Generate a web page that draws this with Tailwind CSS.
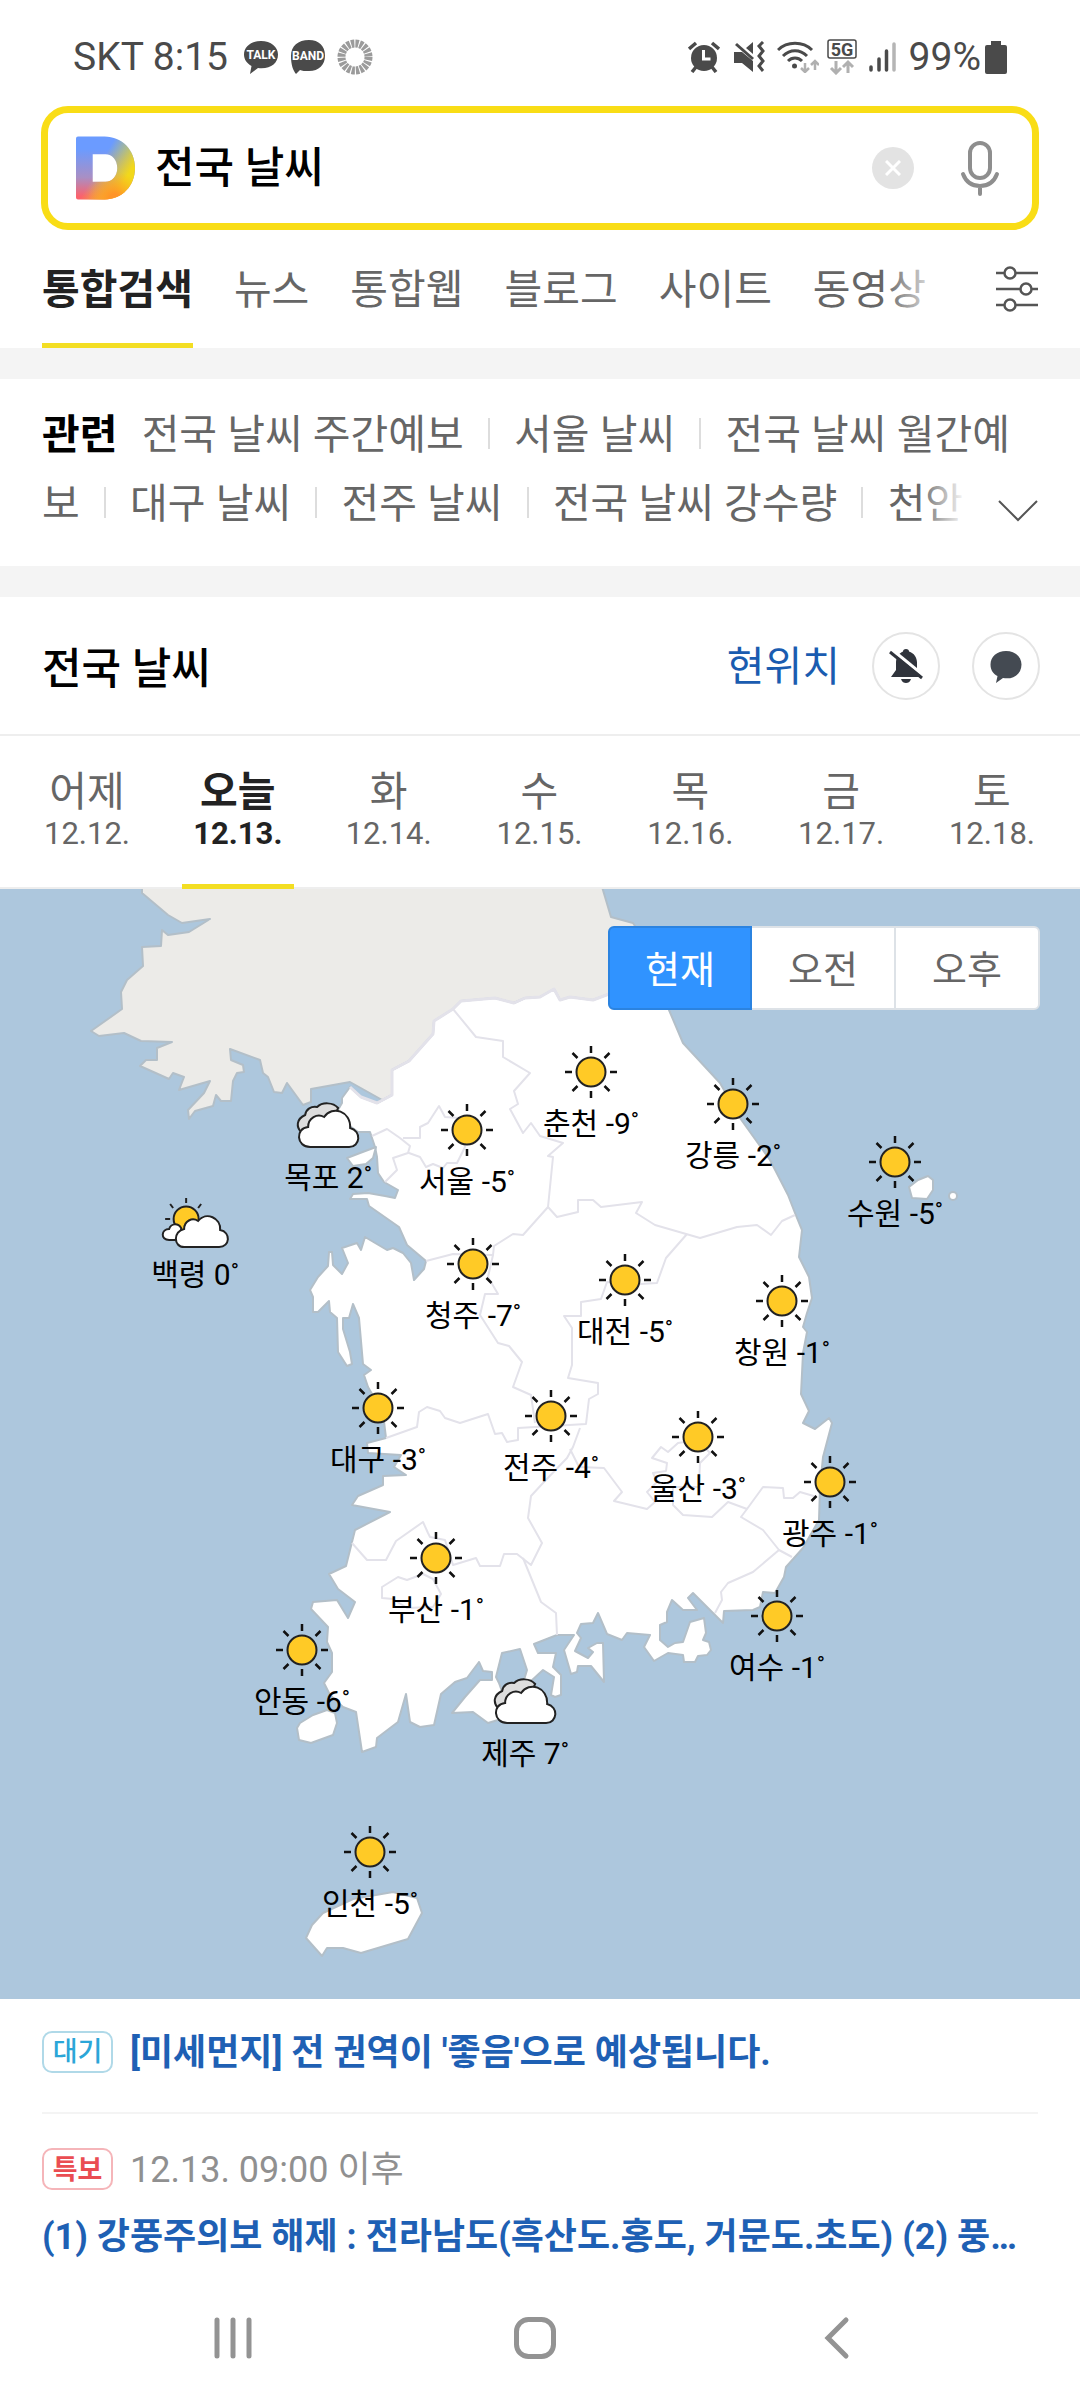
<!DOCTYPE html>
<html lang="ko">
<head>
  <meta charset="UTF-8" />
  <meta name="viewport" content="width=device-width, initial-scale=1" />
  <title>전국 날씨 - 통합검색</title>
  <script src="https://cdn.jsdelivr.net/npm/@tailwindcss/browser@4"></script>
</head>
<body class="bg-white text-black font-[Roboto,'Noto_Sans_CJK_KR',sans-serif]">

  <!-- 상태바 -->
  <div class="flex h-[106px] items-center justify-between px-[73px] pt-2 text-[39px] text-[#4a4a4a]">
    <div class="flex items-center gap-[11px]">
      <span>SKT 8:15</span>
      <svg class="ml-1 h-9 w-9" viewBox="0 0 36 36">
        <path d="M18 2C8 2 1 8 1 15.500c0 5 3 9 7.500 11.500L7 35l8-6c12 1.500 20-4.500 20-13.500C35 8 28 2 18 2z" fill="#4a4a4a" />
        <text x="18" y="20" text-anchor="middle" font-size="12" font-weight="700" fill="#fff">TALK</text>
      </svg>
      <svg class="h-9 w-9" viewBox="0 0 36 36">
        <path d="M19 1C8 1 1 7 1 17c0 9 2 14 5 18l4-4c2 1 5 1 9 1 10 0 16-6 16-15.500S29 1 19 1z" fill="#4a4a4a" />
        <text x="18" y="21" text-anchor="middle" font-size="12" font-weight="700" fill="#fff">BAND</text>
      </svg>
      <svg class="h-9 w-9" viewBox="0 0 36 36">
        <circle cx="18" cy="18" r="13.500" fill="none" stroke="#9b9b9b" stroke-width="8" stroke-dasharray="3.200 1.040" />
      </svg>
    </div>
    <div class="flex items-center">
      <svg class="h-8 w-8" viewBox="0 0 32 32">
        <circle cx="16" cy="17" r="13" fill="#4a4a4a" />
        <path d="M1 8l7-6M31 8l-7-6M8 26l-4 5M24 26l4 5" stroke="#4a4a4a" stroke-width="3.500" />
        <path d="M15.500 9v9h7" fill="none" stroke="#fff" stroke-width="3" />
      </svg>
      <svg class="ml-[13px] h-8 w-8" viewBox="0 0 32 32">
        <path d="M1 11h8l11 9v11L9 22H1zM13 7l7-6v12z" fill="#4a4a4a" />
        <path d="M3 3l17 15" stroke="#4a4a4a" stroke-width="3" />
        <path d="M30 1l-4 4 4 5-4 5 4 5-4 5 4 5" fill="none" stroke="#4a4a4a" stroke-width="3" />
      </svg>
      <svg class="ml-3 h-8 w-[42px]" viewBox="0 0 42 32" fill="none" stroke-width="3">
        <path d="M1 9c9-9 25-9 34 0M6 15c7-7 17-7 24 0M11 20c4-4 10-4 14 0" stroke="#4a4a4a" />
        <circle cx="17.500" cy="25" r="2.500" fill="#4a4a4a" />
        <path d="M28 22v9m-4-4l4 4 4-4M38 29v-9m-4 4l4-4 4 4" stroke="#b0b0b0" stroke-width="2.500" />
      </svg>
      <svg class="ml-2 h-9 w-[30px]" viewBox="0 0 30 36">
        <rect x="1" y="1" width="28" height="18" rx="2" fill="none" stroke="#4a4a4a" stroke-width="1.500" />
        <text x="15" y="16.500" text-anchor="middle" font-size="18" font-weight="700" fill="#4a4a4a">5G</text>
        <path d="M9 22v12m-5-5l5 5 5-5M21 34V23m-5 5l5-5 5 5" fill="none" stroke="#b0b0b0" stroke-width="3" />
      </svg>
      <svg class="ml-3 h-8 w-7" viewBox="0 0 28 32" stroke-width="3.500" stroke-linecap="round">
        <path d="M2 26v3M10 18v11M17.500 10v19" stroke="#4a4a4a" />
        <path d="M25 3v26" stroke="#b5b5b5" />
      </svg>
      <span class="ml-3">99%</span>
      <svg class="ml-1 h-[34px] w-[22px]" viewBox="0 0 22 34">
        <path d="M6 1h10v4h4q2 0 2 2v25q0 2-2 2H2q-2 0-2-2V7q0-2 2-2h4z" fill="#4a4a4a" />
      </svg>
    </div>
  </div>

  <!-- 검색창 -->
  <header>
    <form class="mx-[41px] flex h-[124px] items-center rounded-[27px] border-[7px] border-[#f9dd16] pr-8 pl-7" onsubmit="return false">
      <svg class="h-16 w-[59px] shrink-0" viewBox="0 0 60 64">
        <defs>
          <linearGradient id="logo-base" x1="0" y1="0" x2="0" y2="1">
            <stop offset="0.200" stop-color="#6b9bff" />
            <stop offset="0.650" stop-color="#a98fc4" />
            <stop offset="0.950" stop-color="#fb626c" />
          </linearGradient>
          <linearGradient id="logo-glow" x1="0.250" y1="0.250" x2="0.900" y2="0.650">
            <stop offset="0.300" stop-color="#e8dc1e" stop-opacity="0" />
            <stop offset="0.950" stop-color="#f2d81a" />
          </linearGradient>
          <radialGradient id="logo-warm" cx="0.650" cy="1" r="0.450">
            <stop offset="0.200" stop-color="#ff9428" />
            <stop offset="1" stop-color="#ffa51f" stop-opacity="0" />
          </radialGradient>
          <path id="logo-d" fill-rule="evenodd" d="M2 0h27c18 0 31 14 31 32S47 64 29 64H2q-2 0-2-2V2q0-2 2-2zM17 18v28h13c7 0 12-6 12-14s-5-14-12-14z" />
        </defs>
        <use href="#logo-d" fill="url(#logo-base)" />
        <use href="#logo-d" fill="url(#logo-glow)" />
        <use href="#logo-d" fill="url(#logo-warm)" />
      </svg>
      <input type="text" value="전국 날씨" aria-label="검색어" class="ml-5 h-16 min-w-0 flex-1 text-[43px] font-medium outline-none" />
      <button type="button" aria-label="지우기" class="flex h-[42px] w-[42px] items-center justify-center rounded-full bg-[#e3e3e3]">
        <svg class="h-4 w-4" viewBox="0 0 16 16"><path d="M1 1l14 14M15 1L1 15" stroke="#fff" stroke-width="3" /></svg>
      </button>
      <button type="button" aria-label="음성 검색" class="ml-[46px]">
        <svg class="h-14 w-10" viewBox="0 0 40 56" fill="none" stroke="#8e8e8e" stroke-width="4" stroke-linecap="round">
          <rect x="10" y="3" width="20" height="35" rx="10" />
          <path d="M3 34c3 8 9 12 17 12s14-4 17-12M20 46v8" />
        </svg>
      </button>
    </form>

    <nav class="mx-[42px] flex h-[118px] items-stretch justify-between">
      <div class="relative flex flex-1 gap-[41px] overflow-hidden text-[41px] whitespace-nowrap text-[#666]">
        <a href="#" class="flex items-center border-b-[5px] border-[#f3de23] pt-2 font-bold text-[#222]">통합검색</a>
        <a href="#" class="flex items-center border-b-[5px] border-transparent pt-2">뉴스</a>
        <a href="#" class="flex items-center border-b-[5px] border-transparent pt-2">통합웹</a>
        <a href="#" class="flex items-center border-b-[5px] border-transparent pt-2">블로그</a>
        <a href="#" class="flex items-center border-b-[5px] border-transparent pt-2">사이트</a>
        <a href="#" class="flex items-center border-b-[5px] border-transparent pt-2">동영상</a>
        <div class="absolute inset-y-0 right-0 w-20 bg-linear-to-r from-white/0 to-white to-75%"></div>
      </div>
      <button type="button" aria-label="검색 옵션" class="ml-8">
        <svg class="h-12 w-[42px]" viewBox="0 0 42 48" fill="#fff" stroke="#555" stroke-width="2.500">
          <path d="M0 8h42M0 24h42M0 40h42" />
          <circle cx="14" cy="8" r="5.500" /><circle cx="30" cy="24" r="5.500" /><circle cx="14" cy="40" r="5.500" />
        </svg>
      </button>
    </nav>
  </header>

  <!-- 관련 검색어 -->
  <section class="border-y-[31px] border-[#f4f4f4] px-[42px] pt-[22px] pb-[27px]">
    <div class="relative h-[138px] overflow-hidden text-[41px] leading-[69px] break-all text-[#666]">
      <strong class="mr-3.5 text-black">관련</strong>
      <a href="#">전국 날씨 주간예보</a>
      <span class="mx-3.5 inline-block h-[31px] w-0.5 bg-[#ddd]"></span>
      <a href="#">서울 날씨</a>
      <span class="mx-3.5 inline-block h-[31px] w-0.5 bg-[#ddd]"></span>
      <a href="#">전국 날씨 월간예보</a>
      <span class="mx-3.5 inline-block h-[31px] w-0.5 bg-[#ddd]"></span>
      <a href="#">대구 날씨</a>
      <span class="mx-3.5 inline-block h-[31px] w-0.5 bg-[#ddd]"></span>
      <a href="#">전주 날씨</a>
      <span class="mx-3.5 inline-block h-[31px] w-0.5 bg-[#ddd]"></span>
      <a href="#">전국 날씨 강수량</a>
      <span class="mx-3.5 inline-block h-[31px] w-0.5 bg-[#ddd]"></span>
      <a href="#">천안</a>
      <div class="absolute right-0 bottom-0 flex h-[69px] w-[120px] items-center justify-end bg-linear-to-r from-white/0 to-white to-40%">
        <button type="button" aria-label="펼치기">
          <svg class="mt-3 h-6 w-10" viewBox="0 0 40 24" fill="none" stroke="#555" stroke-width="2"><path d="M1 2l19 19L39 2" /></svg>
        </button>
      </div>
    </div>
  </section>

  <!-- 전국 날씨 -->
  <section>
    <div class="flex h-[139px] items-center border-b-2 border-[#eee] pr-10 pl-[42px]">
      <h2 class="flex-1 pt-2 text-[43px] font-medium">전국 날씨</h2>
      <a href="#" class="pt-1 text-[41px] text-[#1a5cb0]">현위치</a>
      <button type="button" aria-label="알림 끄기" class="ml-8 flex h-[68px] w-[68px] items-center justify-center rounded-full border-2 border-[#e4e4e4]">
        <svg class="h-9 w-9" viewBox="0 0 36 36">
          <path d="M18 1c2 0 3 1 3 2.500 5 1.500 8 6 8 11V22l5 7H3l5-7v-7.500c0-5 3-9.500 7-11C15 2 16 1 18 1zM13 31h10c-1 3-3 4-5 4s-4-1-5-4z" fill="#30343c" />
          <path d="M3 1l33 27" stroke="#fff" stroke-width="3.500" />
          <path d="M2 4l32 26" stroke="#30343c" stroke-width="3" />
        </svg>
      </button>
      <button type="button" aria-label="의견" class="ml-8 flex h-[68px] w-[68px] items-center justify-center rounded-full border-2 border-[#e4e4e4]">
        <svg class="h-9 w-9" viewBox="0 0 36 36">
          <path d="M18 3C9 3 2.500 8.500 2.500 16.500c0 6 3 9.500 7 11.500L8 35l7-5c11 2 18.500-4.500 18.500-13.500C33.500 8.500 27 3 18 3z" fill="#444a52" />
        </svg>
      </button>
    </div>

    <nav class="flex h-[153px] justify-between border-b-2 border-[#eee] pr-8 pl-[31px] text-center text-[41px] leading-[48px] text-[#666]">
      <a href="#" class="w-28 pt-8">어제<span class="block text-[31px] leading-[36px]">12.12.</span></a>
      <a href="#" class="-mb-0.5 w-28 border-b-[5px] border-[#f3de23] pt-8 font-bold text-[#222]">오늘<span class="block text-[31px] leading-[36px]">12.13.</span></a>
      <a href="#" class="w-28 pt-8">화<span class="block text-[31px] leading-[36px]">12.14.</span></a>
      <a href="#" class="w-28 pt-8">수<span class="block text-[31px] leading-[36px]">12.15.</span></a>
      <a href="#" class="w-28 pt-8">목<span class="block text-[31px] leading-[36px]">12.16.</span></a>
      <a href="#" class="w-28 pt-8">금<span class="block text-[31px] leading-[36px]">12.17.</span></a>
      <a href="#" class="w-28 pt-8">토<span class="block text-[31px] leading-[36px]">12.18.</span></a>
    </nav>

    <!-- 지도 -->
    <div id="map" class="relative aspect-[1080/1110] w-full overflow-hidden bg-[#adc7dd]">
      <svg class="block h-full w-full" viewBox="0 889 1080 1110" stroke-linejoin="round">
        <!-- 북쪽 -->
        <path fill="#ecebe8" stroke="#b3bfc8" stroke-width="2" d="M142 880V893L168 915 182 923 210 919 189 932 168 935 162 930 161 946 142 947 143 966 127 980 121 992 122 1009 91 1031 99 1036 124 1033 141 1041 172 1042 157 1048 157 1060 146 1060 140 1066 169 1079 173 1073 184 1077 179 1090 210 1081 204 1093 188 1110 189 1119 195 1111 213 1106 216 1095 221 1101 231 1101 233 1081 237 1073 244 1072 243 1065 231 1060 230 1049 260 1060 263 1073 268 1077 274 1092 282 1093 287 1083 303 1105 311 1102 311 1089 350 1082 400 1110 600 1010 640 960 635 926 633 923 611 917 600 880z" />
        <!-- 남쪽 -->
        <path fill="#fff" stroke="#b3bfc8" stroke-width="2" d="M669 1010L683 1043 720 1083 740 1118 770 1160 788 1195 795 1213 802 1230 799 1257 809 1277 812 1298 807 1313 803 1327 807 1332 803 1353 801 1394 809 1411 803 1423 815 1429 829 1418 832 1423 823 1457 820 1487 819 1520 803 1548 786 1567 784 1577 775 1593 763 1592 760 1607 753 1610 724 1611 723 1623 693 1593 688 1598 697 1610 683 1610 672 1600 667 1612 667 1622 660 1625 660 1640 668 1647 675 1643 683 1642 690 1622 704 1618 706 1633 703 1640 709 1642 711 1650 707 1655 698 1656 695 1662 684 1662 683 1655 668 1653 654 1661 644 1647 650 1635 627 1633 622 1640 607 1634 598 1613 593 1623 581 1624 577 1633 581 1638 575 1651 588 1658 593 1652 588 1648 597 1643 603 1643 604 1682 591 1666 578 1666 577 1672 571 1674 564 1650 574 1635 557 1635 534 1644 538 1653 556 1653 553 1667 561 1675 561 1695 555 1697 551 1695 554 1677 543 1670 530 1682 524 1680 527 1670 520 1649 502 1653 496 1677 499 1683 505 1700 498 1720 488 1723 473 1712 452 1713 465 1697 480 1680 492 1680 492 1672 483 1671 479 1662 467 1678 455 1682 441 1694 434 1725 420 1727 410 1722 406 1694 398 1722 377 1738 376 1747 362 1752 356 1712 343 1707 330 1695 324 1683 332 1672 332 1653 327 1642 328 1627 311 1609 313 1602 337 1600 348 1618 355 1602 338 1589 329 1574 346 1566 352 1542 355 1530 390 1512 352 1505 358 1496 383 1485 383 1476 406 1475 394 1467 401 1455 368 1453 367 1443 386 1438 383 1413 368 1387 364 1375 371 1370 363 1364 359 1318 353 1304 349 1318 343 1318 343 1329 350 1352 352 1364 347 1366 338 1352 337 1318 330 1312 329 1301 318 1312 313 1312 313 1297 310 1290 318 1277 328 1266 329 1252 332 1252 333 1265 342 1274 348 1263 342 1248 357 1243 361 1250 365 1237 387 1250 393 1248 403 1253 411 1263 414 1280 424 1269 426 1261 407 1245 399 1227 369 1206 367 1199 350 1199 353 1194 368 1193 385 1196 395 1198 398 1190 384 1182 378 1173 377 1157 375 1147 370 1132 358 1132 335 1115 342 1103 342 1098 350 1087 361 1097 377 1103 392 1095 392 1070 409 1061 433 1034 434 1021 453 1009 461 1001 495 998 514 1003 525 998 540 997 554 989 560 1000 570 997 593 1000 609 994 650 975z" />
        <path fill="none" stroke="#e3e2ea" stroke-width="3" d="M350 1087L361 1097 377 1103 392 1095 392 1070 409 1061 433 1034 434 1021 453 1009 461 1001 495 998 514 1003 525 998 540 997 554 989 560 1000 570 997 593 1000 609 994 650 975" />
        <!-- 섬 -->
        <g fill="#fff" stroke="#b3bfc8" stroke-width="2">
          <path d="M347 1158L360 1153 376 1147 373 1158 366 1164 353 1166z" />
          <path d="M909 1187L918 1180 928 1176 933 1180 933 1190 927 1199 912 1198z" />
          <circle cx="953" cy="1196" r="4" />
          <path d="M297 1728L300 1723 313 1715 327 1710 335 1713 337 1723 333 1735 311 1743 299 1740z" />
          <path d="M306 1938L312 1925 323 1913 353 1899 393 1892 417 1898 422 1913 408 1939 361 1953 343 1948 327 1948 322 1956z" />
        </g>
        <!-- 시도 경계 -->
        <g fill="none" stroke="#e3e2ea" stroke-width="2">
          <path d="M453 1009L476 1037 503 1041 503 1057 530 1073 514 1091 518 1104 510 1109 523 1133 531 1123 540 1136 563 1143 548 1156 553 1157 548 1207 523 1235 513 1234 494 1246 493 1255 453 1254 426 1261" />
          <path d="M548 1207L557 1217 578 1212 578 1200 593 1200 601 1207 642 1202 636 1213 655 1225 700 1238 737 1227 757 1225 771 1235 782 1221 795 1215" />
          <path d="M687 1234L666 1258 657 1283 640 1284 607 1282 601 1299 581 1302 581 1316 564 1316 572 1328 572 1365 568 1378 598 1383 598 1394 589 1399 586 1424 518 1428 518 1440 507 1442 502 1433 495 1434 488 1414 460 1423 445 1418 440 1411 427 1407 419 1412 417 1427 386 1438" />
          <path d="M493 1255L488 1277 498 1294 485 1294 480 1315 498 1343 509 1346 522 1362 513 1387 531 1395 535 1423" />
          <path d="M580 1428L573 1447 567 1458 543 1483 531 1496 528 1518 542 1543 531 1565 517 1554 504 1554 500 1566 480 1566 476 1558 453 1565 445 1540 430 1537 428 1533 423 1522 396 1541 386 1560 367 1560 352 1543" />
          <path d="M523 1558L541 1602 556 1613 557 1635" />
          <path d="M382 1587L398 1577 407 1580 423 1574 433 1579 441 1594 433 1607 407 1608 393 1599 382 1598z" />
          <path d="M570 1449L579 1467 604 1468 622 1492 614 1501 647 1509 655 1502 647 1492 657 1482 653 1473 666 1471 667 1463 652 1458 661 1447 668 1452 678 1443 698 1440 710 1453 700 1463 699 1487 673 1487 673 1505 683 1515 712 1517 728 1502 747 1509 763 1487 783 1488 784 1498 793 1498 800 1492 817 1497" />
          <path d="M747 1509L741 1517 763 1530 779 1550 792 1557M779 1550L753 1572 728 1583 721 1592 722 1600 715 1613" />
          <path d="M372 1136L387 1129 400 1138 410 1146 408 1153 393 1158 397 1170 385 1182M403 1138L420 1138 420 1127 428 1123 439 1106 445 1117 460 1118 465 1147 457 1163 447 1163 443 1168 433 1164 426 1167 420 1157 409 1153" />
        </g>
      </svg>

      <div class="absolute top-[37px] right-10 flex h-[84px] rounded-md border-2 border-[#dde2e7] bg-white text-[38px] text-[#666]">
        <button type="button" class="-my-0.5 -ml-0.5 w-36 rounded-l-md border-2 border-[#2b83e0] bg-[#3093ff] pt-1 text-white">현재</button>
        <button type="button" class="w-[142px] pt-1">오전</button>
        <button type="button" class="w-36 border-l-2 border-[#dde2e7] pt-1">오후</button>
      </div>
    </div>

    <div class="px-[42px]">
      <div class="flex h-[115px] items-center gap-[17px] border-b-2 border-[#f4f4f4] pb-2">
        <span class="flex h-[42px] w-[71px] items-center justify-center rounded-[10px] border-2 border-[#b0d9e8] pt-0.5 text-[27px] font-medium text-[#2ba6d8]">대기</span>
        <a href="#" class="pt-0.5 text-[36px] font-bold text-[#1e60b4]">[미세먼지] 전 권역이 '좋음'으로 예상됩니다.</a>
      </div>
      <div class="flex items-center gap-[17px] pt-[27px] leading-[54px]">
        <span class="flex h-[42px] w-[71px] items-center justify-center rounded-[10px] border-2 border-[#f5b5b9] pt-0.5 text-[27px] font-bold text-[#ea4d52]">특보</span>
        <span class="pt-0.5 text-[36px] text-[#909090]">12.13. 09:00 이후</span>
      </div>
      <a href="#" class="mt-2 block truncate text-[36px] leading-[64px] font-bold text-[#1e60b4]">(1) 강풍주의보 해제 : 전라남도(흑산도.홍도, 거문도.초도) (2) 풍…</a>
    </div>
  </section>

  <!-- 내비게이션 바 -->
  <div class="mt-[46px] flex items-center justify-between px-[212px] pb-9">
    <button type="button" aria-label="최근 앱"><svg class="h-[46px] w-[42px]" viewBox="0 0 42 46" stroke="#939393" stroke-width="5" stroke-linecap="round"><path d="M5 5v36M21 5v36M37 5v36" /></svg></button>
    <button type="button" aria-label="홈"><svg class="h-[46px] w-[46px]" viewBox="0 0 46 46"><rect x="4.500" y="4.500" width="37" height="37" rx="12" fill="none" stroke="#939393" stroke-width="5" /></svg></button>
    <button type="button" aria-label="뒤로"><svg class="h-[46px] w-[52px]" viewBox="0 0 52 46" fill="none" stroke="#939393" stroke-width="5" stroke-linecap="round"><path d="M30 5L12 23l18 18" /></svg></button>
  </div>

  <!-- 날씨 아이콘 -->
  <svg class="hidden">
    <symbol id="sun" viewBox="0 0 72 56">
      <circle cx="36" cy="28" r="14.500" fill="#ffca26" stroke="#222" stroke-width="2" />
      <path d="M36 2v7M36 47v7M10 28h7M55 28h7M17.500 9l5 5M49.500 14l5-5M17.500 47l5-5M49.500 42l5 5" stroke="#111" stroke-width="2.500" />
    </symbol>
    <symbol id="cloud" viewBox="0 0 72 56">
      <path d="M9 34c-5-5-5-13 4-17 1-6 6-9 12-8 5-5 16-5 21 1l-8 18z" fill="#ddd" stroke="#222" stroke-width="2" />
      <path d="M18 49c-14 0-15-19-2-20 0-9 9-14 16-10 8-12 27-6 26 11 12 3 10 19-1 19z" fill="#fff" stroke="#222" stroke-width="2" />
    </symbol>
    <symbol id="partly" viewBox="0 0 72 56">
      <path d="M27 3v5M11 9l3 4M42 9l-3 4M6 24h5" stroke="#222" stroke-width="2" />
      <circle cx="27" cy="24" r="12.500" fill="#ffca26" stroke="#222" stroke-width="2" />
      <path d="M10 45c-9 0-8-11 0-11 2-6 9-6 12-1v12z" fill="#fff" stroke="#222" stroke-width="2" />
      <path d="M25 52c-11 0-11-16 0-18 0-8 8-12 14-8 8-10 23-3 22 9 11 2 10 17-1 17z" fill="#fff" stroke="#222" stroke-width="2" />
    </symbol>
  </svg>

  <script>
    // 지도 위 위치는 1080 x 1110 기준
    const cities = [
      { name: '춘천', temp: -9, icon: 'sun', x: 591, y: 183 },
      { name: '강릉', temp: -2, icon: 'sun', x: 733, y: 215 },
      { name: '목포', temp: 2, icon: 'cloud', x: 328, y: 237 },
      { name: '서울', temp: -5, icon: 'sun', x: 467, y: 241 },
      { name: '수원', temp: -5, icon: 'sun', x: 895, y: 273 },
      { name: '백령', temp: 0, icon: 'partly', x: 195, y: 334 },
      { name: '청주', temp: -7, icon: 'sun', x: 473, y: 375 },
      { name: '대전', temp: -5, icon: 'sun', x: 625, y: 391 },
      { name: '창원', temp: -1, icon: 'sun', x: 782, y: 412 },
      { name: '대구', temp: -3, icon: 'sun', x: 378, y: 519 },
      { name: '전주', temp: -4, icon: 'sun', x: 551, y: 527 },
      { name: '울산', temp: -3, icon: 'sun', x: 698, y: 548 },
      { name: '광주', temp: -1, icon: 'sun', x: 830, y: 593 },
      { name: '부산', temp: -1, icon: 'sun', x: 436, y: 669 },
      { name: '여수', temp: -1, icon: 'sun', x: 777, y: 727 },
      { name: '안동', temp: -6, icon: 'sun', x: 302, y: 761 },
      { name: '제주', temp: 7, icon: 'cloud', x: 525, y: 813 },
      { name: '인천', temp: -5, icon: 'sun', x: 370, y: 963 },
    ];

    const map = document.getElementById('map');
    cities.forEach(city => {
      map.insertAdjacentHTML('beforeend', `
        <a href="#" class="absolute flex -translate-x-1/2 -mt-7 flex-col items-center whitespace-nowrap" style="left:${city.x / 10.8}%;top:${city.y / 11.1}%">
          <svg class="h-14 w-[72px]"><use href="#${city.icon}" /></svg>
          <span class="mt-0.5 text-[30px] leading-[44px]">${city.name} ${city.temp}<span class="align-[6px] text-[22px] leading-none">°</span></span>
        </a>`);
    });
  </script>
</body>
</html>
